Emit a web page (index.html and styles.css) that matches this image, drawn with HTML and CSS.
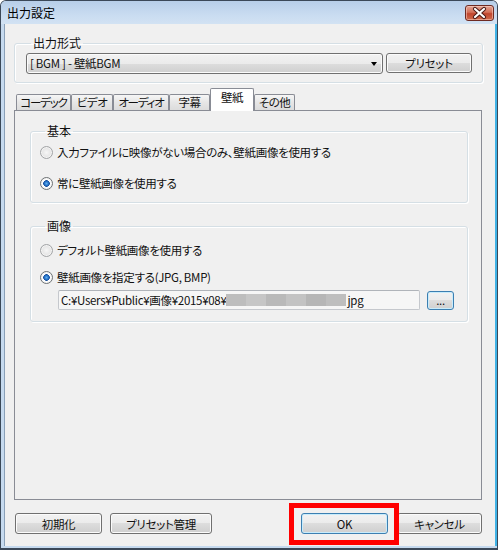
FILE: index.html
```html
<!DOCTYPE html>
<html lang="ja">
<head>
<meta charset="utf-8">
<title>出力設定</title>
<link rel="stylesheet" href="styles.css">
</head>
<body>
<div class="window">
  <div class="titlebar">
    <span class="title">出力設定</span>
    <div class="close-btn">
      <svg width="29" height="16" viewBox="0 0 29 16">
        <path d="M10 4 L19 12 M19 4 L10 12" stroke="#4a1a16" stroke-width="4.2" stroke-linecap="round"/>
        <path d="M10 4 L19 12 M19 4 L10 12" stroke="#ffffff" stroke-width="2.2" stroke-linecap="round"/>
      </svg>
    </div>
  </div>
  <div class="client">
    <fieldset class="group group-format">
      <legend>出力形式</legend>
      <div class="format-row">
        <div class="combo"><span class="combo-text">[ BGM ] - 壁紙BGM</span><span class="combo-arrow"></span></div>
        <button class="btn btn-preset">プリセット</button>
      </div>
    </fieldset>

    <div class="tabs">
      <div class="tab w55 tight">コーデック</div>
      <div class="tab w42">ビデオ</div>
      <div class="tab w56 tight">オーディオ</div>
      <div class="tab w41">字幕</div>
      <div class="tab selected">壁紙</div>
      <div class="tab w41">その他</div>
    </div>

    <div class="panel">
      <fieldset class="group group-basic">
        <legend>基本</legend>
        <div class="radio-row"><span class="radio"></span><span class="radio-label">入力ファイルに映像がない場合のみ、壁紙画像を使用する</span></div>
        <div class="radio-row row-gap-basic"><span class="radio checked"></span><span class="radio-label">常に壁紙画像を使用する</span></div>
      </fieldset>

      <fieldset class="group group-image">
        <legend>画像</legend>
        <div class="radio-row"><span class="radio"></span><span class="radio-label">デフォルト壁紙画像を使用する</span></div>
        <div class="radio-row row-gap-image"><span class="radio checked"></span><span class="radio-label">壁紙画像を指定する(JPG, BMP)</span></div>
        <div class="file-row">
          <div class="textbox">
            <span class="path">C:¥Users¥Public¥画像¥2015¥08¥</span><span class="mosaic"><i class="m1"></i><i class="m2"></i><i class="m3"></i><i class="m4"></i><i class="m5"></i><i class="m6"></i></span><span class="ext">jpg</span>
          </div>
          <button class="btn btn-browse">...</button>
        </div>
      </fieldset>
    </div>

    <div class="footer">
      <div class="footer-left">
        <button class="btn btn-init">初期化</button>
        <button class="btn btn-manage">プリセット管理</button>
      </div>
      <div class="footer-right">
        <span class="ok-wrap"><button class="btn btn-ok">OK</button></span>
        <button class="btn btn-cancel">キャンセル</button>
      </div>
    </div>
  </div>
</div>
</body>
</html>
```

FILE: styles.css
```css
* { box-sizing: border-box; }
html, body { margin: 0; padding: 0; }
body {
  width: 498px;
  height: 550px;
  overflow: hidden;
  background: #ffffff;
  font-family: "Noto Sans CJK JP", "Noto Sans", sans-serif;
  font-size: 11.5px;
  letter-spacing: -0.3px;
  color: #111;
  font-feature-settings: "palt";
}

.window {
  width: 498px;
  height: 550px;
  border: 1px solid #3b4858;
  border-bottom-width: 2px;
  border-radius: 6px 6px 0 0;
  background: #c6daef;
  display: flex;
  flex-direction: column;
}

.titlebar {
  height: 23px;
  flex: none;
  display: flex;
  justify-content: space-between;
  align-items: flex-start;
  padding: 0 3px 0 6px;
  background: linear-gradient(#b7cee8, #c9dcf1 60%, #d2e2f3);
  border-radius: 5px 5px 0 0;
}
.title {
  line-height: 23px;
  font-size: 12px;
  letter-spacing: 0;
  color: #000;
}
.close-btn {
  margin-top: 4px;
  width: 29px;
  height: 16px;
  border: 1px solid #6e2a22;
  border-radius: 3px;
  background: linear-gradient(#e3a493 0%, #d36f58 45%, #c0452d 55%, #cf6a4c 100%);
  box-shadow: inset 0 0 0 1px rgba(255, 220, 210, 0.5);
  display: flex;
  align-items: center;
  justify-content: center;
}
.close-btn svg { display: block; margin: -1px; }

.client {
  flex: 1;
  margin: 0 0 2px 3px;
  border-left: 1px solid #8aa0b8;
  border-right: 2px solid #3fb2e6;
  background: #f0f0f0;
  padding: 12px 13px 0 9px;
  display: flex;
  flex-direction: column;
}

/* group boxes */
.group {
  margin: 0;
  min-width: 0;
  border: 1px solid #d5dfe5;
  border-radius: 3px;
  box-shadow: inset 1px 1px 0 #ffffff, 1px 1px 0 #ffffff;
}
.group legend {
  padding: 0 2px;
  margin-left: 5px;
  line-height: 14px;
  font-size: 12px;
  letter-spacing: 0;
}

.group-format {
  width: 469px;
  padding: 3px 10px 8px 11px;
}
.format-row {
  display: flex;
  gap: 3px;
}
.combo {
  width: 357px;
  height: 21px;
  border: 1px solid #707070;
  border-radius: 3px;
  background: linear-gradient(#f2f2f2 0%, #ebebeb 50%, #dddddd 50%, #cfcfcf 100%);
  box-shadow: inset 0 0 0 1px #fbfbfb;
  display: flex;
  align-items: center;
  justify-content: space-between;
  padding: 0 5px 0 3px;
}
.combo-text { line-height: 19px; }
.combo-arrow {
  width: 0;
  height: 0;
  border-left: 3.5px solid transparent;
  border-right: 3.5px solid transparent;
  border-top: 4px solid #000;
  margin-top: 1px;
}

.btn {
  font-family: inherit;
  font-size: 11.5px;
  letter-spacing: -0.3px;
  font-feature-settings: "palt";
  color: #111;
  padding: 0;
  margin: 0;
  height: 21px;
  border: 1px solid #707070;
  border-radius: 3px;
  background: linear-gradient(#f2f2f2 0%, #ebebeb 50%, #dddddd 50%, #cfcfcf 100%);
  box-shadow: inset 0 0 0 1px #fbfbfb;
  line-height: 18px;
}
.btn-preset { width: 86px; height: 20px; }

/* tabs */
.tabs {
  display: flex;
  align-items: flex-end;
  height: 23px;
  margin: 5px 0 -1px 2px;
  position: relative;
  z-index: 1;
}
.tab {
  height: 16px;
  margin-bottom: 1px;
  border: 1px solid #898c95;
  border-bottom: none;
  border-radius: 2px 2px 0 0;
  background: linear-gradient(#f6f6f6, #e6e6e6 50%, #dcdcdc);
  text-align: center;
  line-height: 15px;
  white-space: nowrap;
  font-size: 11.5px;
  letter-spacing: -0.5px;
}
.tab.tight { letter-spacing: -1.2px; }
.w55 { width: 55px; }
.w42 { width: 42px; }
.w56 { width: 56px; }
.w41 { width: 41px; }
.tab.selected {
  width: 44px;
  height: 23px;
  margin-bottom: 0;
  background: #ffffff;
  line-height: 16px;
}

.panel {
  width: 468px;
  height: 390px;
  border: 1px solid #898c95;
  background: #f0f0f0;
  padding: 13px 13px 0 15px;
}

.group-basic {
  padding: 6px 10px 11px 9px;
}
.group-image {
  margin-top: 16px;
  padding: 9px 12px 11px 9px;
}

.radio-row {
  height: 16px;
  display: flex;
  align-items: center;
  gap: 4px;
}
.row-gap-basic { margin-top: 15px; }
.row-gap-image { margin-top: 11px; }
.radio {
  width: 13px;
  height: 13px;
  flex: none;
  border-radius: 50%;
  border: 1px solid #a2a4a6;
  background: radial-gradient(circle at 50% 50%, #f6f6f6 0, #e2e2e2 70%, #d0d0d0 100%);
  box-shadow: inset 0 0 0 1px #f4f4f4;
}
.radio.checked {
  border-color: #6e7274;
  background: radial-gradient(circle at 50% 50%, #5fb0f0 0, #1f68bf 2.3px, #174f9c 3px, #ffffff 3.6px, #eaeaea 100%);
}
.radio-label { line-height: 16px; white-space: nowrap; }

.file-row {
  display: flex;
  align-items: center;
  gap: 7px;
  margin-top: 5px;
  margin-left: 18px;
}
.textbox {
  width: 362px;
  height: 20px;
  border: 1px solid #c5c8cd;
  border-top-color: #b0b4ba;
  border-radius: 2px;
  background: #f6f6f6;
  display: flex;
  align-items: center;
  padding-left: 2px;
  white-space: nowrap;
  overflow: hidden;
}
.path, .ext { line-height: 18px; }
.mosaic {
  display: flex;
  height: 12px;
  margin-right: 1px;
}
.mosaic i { display: block; height: 12px; width: 20px; }
.m1 { background: #bdbdbd; }
.m2 { background: #c6c6c6; }
.m3 { background: #b9b9b9; }
.m4 { background: #c3c3c3; }
.m5 { background: #b6b6b6; }
.m6 { background: #bebebe; }

.btn-browse {
  width: 27px;
  height: 19px;
  border-color: #3c7fb1;
  box-shadow: inset 0 0 0 1px #c8ecfc;
  line-height: 14px;
}

/* footer */
.footer {
  margin-top: 13px;
  display: flex;
  justify-content: space-between;
}
.footer-left, .footer-right {
  display: flex;
  gap: 8px;
}
.footer-left { margin-left: 1px; }
.footer-right { gap: 9px; }
.btn-init { width: 87px; }
.btn-manage { width: 102px; }
.btn-ok {
  width: 87px;
  border-color: #3c7fb1;
  box-shadow: inset 0 0 0 1px #c8ecfc;
}
.btn-cancel { width: 85px; }

.ok-wrap {
  position: relative;
  display: block;
}
.ok-wrap::after {
  content: "";
  position: absolute;
  top: -10px;
  left: -12px;
  right: -11px;
  bottom: -11px;
  border: 5px solid #ff0000;
  pointer-events: none;
}
```
